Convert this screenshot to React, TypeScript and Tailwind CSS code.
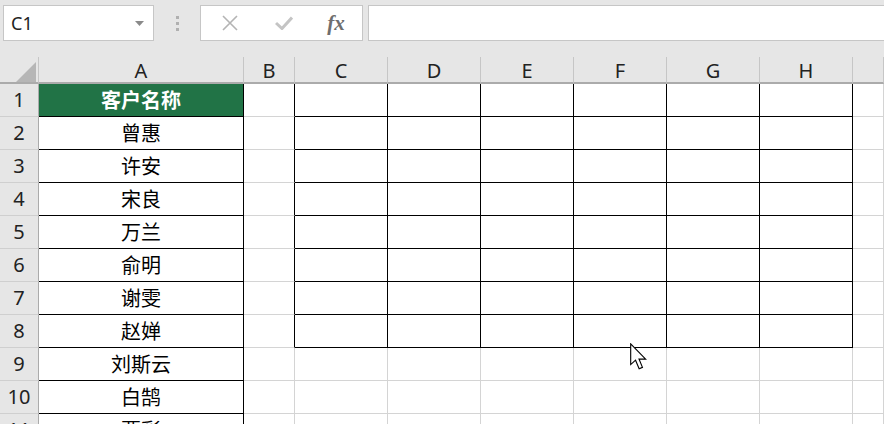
import React from "react";

const names = ["客户名称", "曾惠", "许安", "宋良", "万兰", "俞明", "谢雯", "赵婵", "刘斯云", "白鹄", "贾彩"];
const cols = ["A", "B", "C", "D", "E", "F", "G", "H", ""];

function cellClass(r: number, c: number): string {
  const parts: string[] = ["h-[33px]", "border-r", "border-b", "flex", "items-center", "justify-center"];
  let right = "border-r-[#d4d4d4]";
  let bottom = "border-b-[#d4d4d4]";
  if (c === 0) {
    right = "border-r-black";
    bottom = "border-b-black";
  } else if (c === 1 && r <= 8) {
    right = "border-r-black";
  } else if (c >= 2 && c <= 7 && r <= 8) {
    right = "border-r-black";
    bottom = "border-b-black";
  }
  parts.push(right, bottom);
  if (r === 1 && c === 0) {
    parts.push("bg-[#217346]", "text-white", "font-bold");
  } else {
    parts.push("bg-white", "text-black");
  }
  return parts.join(" ");
}

export default function App() {
  const rows = Array.from({ length: 11 }, (_, i) => i + 1);
  return (
    <div
      className="w-[884px] h-[424px] overflow-hidden bg-[#e6e6e6] relative"
      style={{ fontFamily: '"Noto Sans", "Noto Sans CJK SC", sans-serif' }}
    >
      {/* Formula bar */}
      <div className="h-[57px] flex items-start pt-[5px] pl-[3px]">
        <div className="w-[151px] h-[36px] bg-white border border-[#c6c6c6] flex items-center justify-between pl-[7px] pr-[9px]">
          <span className="text-[18px] text-[#222]">C1</span>
          <svg width="9" height="5" viewBox="0 0 9 5">
            <path d="M0 0 H9 L4.5 5 Z" fill="#8a8a8a" />
          </svg>
        </div>
        <div className="w-[46px] h-[36px] flex flex-col items-center justify-center gap-[3px]">
          <div className="w-[3px] h-[3px] bg-[#b0b0b0]" />
          <div className="w-[3px] h-[3px] bg-[#b0b0b0]" />
          <div className="w-[3px] h-[3px] bg-[#b0b0b0]" />
        </div>
        <div className="w-[163px] h-[36px] bg-white border border-[#c6c6c6] flex items-center">
          <div className="w-[55px] flex justify-center pl-[2px]">
            <svg width="16" height="16" viewBox="0 0 16 16">
              <path d="M1 1 L15 15 M15 1 L1 15" stroke="#b4b4b4" strokeWidth="1.6" />
            </svg>
          </div>
          <div className="w-[55px] flex justify-center">
            <svg width="18" height="14" viewBox="0 0 18 14">
              <path d="M1 7 L7 12.5 L17 1.5" stroke="#c4c4c4" strokeWidth="3" fill="none" />
            </svg>
          </div>
          <div className="w-[50px] flex justify-center">
            <span
              className="italic font-bold text-[21px] text-[#6e6e6e] leading-none"
              style={{ fontFamily: '"Liberation Serif", serif' }}
            >
              fx
            </span>
          </div>
        </div>
        <div className="ml-[5px] flex-1 h-[36px] bg-white border border-[#c6c6c6] border-r-0" />
      </div>

      {/* Grid */}
      <div className="grid grid-cols-[39px_205px_51px_93px_93px_93px_93px_93px_93px_1fr]">
        {/* Header row */}
        <div className="h-[27px] border-r border-r-[#c6c6c6] border-b-2 border-b-[#ababab] relative">
          <svg className="absolute left-[16px] top-[5px]" width="20" height="20" viewBox="0 0 20 20">
            <path d="M20 0 V20 H0 Z" fill="#b6b6b6" />
          </svg>
        </div>
        {cols.map((c, i) => (
          <div
            key={i}
            className="h-[27px] border-r border-r-[#c6c6c6] border-b-2 border-b-[#ababab] flex items-center justify-center text-[20px] text-[#222] leading-none pt-[2px]"
          >
            {c}
          </div>
        ))}

        {rows.map((r) => (
          <React.Fragment key={r}>
            <div className="h-[33px] border-r border-r-[#ababab] border-b border-b-[#cfcfcf] bg-[#e6e6e6] flex items-center justify-center text-[20px] text-[#222]">
              {r}
            </div>
            {cols.map((_, c) => (
              <div
                key={c}
                className={cellClass(r, c)}
                style={c === 0 ? { fontFamily: '"Noto Sans CJK SC", sans-serif' } : undefined}
              >
                {c === 0 ? <span className="text-[20px] leading-none">{names[r - 1]}</span> : null}
              </div>
            ))}
          </React.Fragment>
        ))}
      </div>

      {/* Mouse cursor */}
      <svg className="absolute left-[630px] top-[343px]" width="18" height="28" viewBox="0 0 13 20">
        <path
          d="M0.5 0.5 V15.5 L4 12.3 L6.6 18.5 L9 17.5 L6.5 11.5 H11.3 Z"
          fill="white"
          stroke="black"
          strokeWidth="0.8"
          strokeLinejoin="miter"
        />
      </svg>
    </div>
  );
}
